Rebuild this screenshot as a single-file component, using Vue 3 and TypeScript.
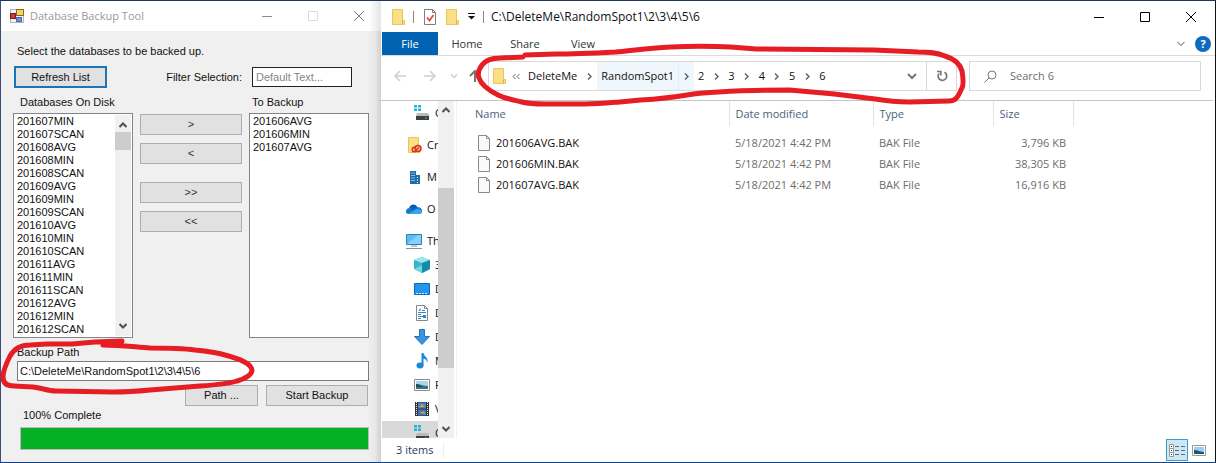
<script setup lang="ts">
import { ref } from 'vue'

interface BackupFile {
  name: string
  modified: string
  type: string
  size: string
}

interface NavItem {
  icon: string
  label: string
  level: number
  active?: boolean
}

const onDisk: string[] = [
  '201607MIN', '201607SCAN', '201608AVG', '201608MIN', '201608SCAN', '201609AVG',
  '201609MIN', '201609SCAN', '201610AVG', '201610MIN', '201610SCAN', '201611AVG',
  '201611MIN', '201611SCAN', '201612AVG', '201612MIN', '201612SCAN',
]
const toBackup: string[] = ['201606AVG', '201606MIN', '201607AVG']
const backupPath = ref('C:\\DeleteMe\\RandomSpot1\\2\\3\\4\\5\\6')
const filterText = ref('')
const searchText = ref('')

const crumbs: string[] = ['DeleteMe', 'RandomSpot1', '2', '3', '4', '5', '6']

const files: BackupFile[] = [
  { name: '201606AVG.BAK', modified: '5/18/2021 4:42 PM', type: 'BAK File', size: '3,796 KB' },
  { name: '201606MIN.BAK', modified: '5/18/2021 4:42 PM', type: 'BAK File', size: '38,305 KB' },
  { name: '201607AVG.BAK', modified: '5/18/2021 4:42 PM', type: 'BAK File', size: '16,916 KB' },
]

const navItems: NavItem[] = [
  { icon: 'drive', label: 'C', level: 1 },
  { icon: 'cloud-folder', label: 'Cr', level: 0 },
  { icon: 'building', label: 'M', level: 0 },
  { icon: 'onedrive', label: 'O', level: 0 },
  { icon: 'pc', label: 'Th', level: 0 },
  { icon: 'cube', label: '3', level: 1 },
  { icon: 'desktop', label: 'D', level: 1 },
  { icon: 'document', label: 'D', level: 1 },
  { icon: 'download', label: 'D', level: 1 },
  { icon: 'music', label: 'M', level: 1 },
  { icon: 'picture', label: 'P', level: 1 },
  { icon: 'video', label: 'V', level: 1 },
  { icon: 'drive', label: 'C', level: 1, active: true },
]
</script>

<template>
  <div class="desktop">
    <section class="tool" aria-label="Database Backup Tool">
      <header class="tool-title">
        <svg class="app-icon" width="14" height="14" viewBox="0 0 14 14">
          <rect x="0.5" y="0.5" width="13" height="13" fill="#f4f4f4" stroke="#b5b5b5" />
          <rect x="6.5" y="0.5" width="7" height="6" fill="#f7d25a" stroke="#8a6a1c" />
          <rect x="0.5" y="4.5" width="5" height="5" fill="#c83a32" stroke="#7a1e1a" />
          <rect x="6.5" y="8.5" width="5" height="4" fill="#6d93dc" stroke="#4a67a8" />
        </svg>
        <h1>Database Backup Tool</h1>
        <button class="win" aria-label="Minimize"><svg width="10" height="10"><path d="M0 5.5h10" stroke="#8c8c8c" /></svg></button>
        <button class="win" aria-label="Maximize" disabled><svg width="10" height="10"><path d="M.5 .5h9v9h-9z" fill="none" stroke="#dcdcdc" /></svg></button>
        <button class="win" aria-label="Close"><svg width="10" height="10"><path d="M0 0l10 10M10 0L0 10" stroke="#7c7c7c" /></svg></button>
      </header>

      <div class="tool-body">
        <p class="intro">Select the databases to be backed up.</p>
        <div class="filter-row">
          <button class="btn focus">Refresh List</button>
          <label for="filter">Filter Selection:</label>
          <input id="filter" v-model="filterText" type="text" placeholder="Default Text..." />
        </div>

        <div class="lists">
          <div class="list-col">
            <label for="disk">Databases On Disk</label>
            <div class="listbox">
              <select id="disk" multiple>
                <option v-for="d in onDisk" :key="d">{{ d }}</option>
              </select>
              <div class="scroll">
                <svg width="8" height="6"><path d="M.5 5L4 1.500L7.500 5" fill="none" stroke="#505050" stroke-width="2" /></svg>
                <i class="thumb"></i>
                <svg class="down" width="8" height="6"><path d="M.5 1L4 4.500L7.500 1" fill="none" stroke="#505050" stroke-width="2" /></svg>
              </div>
            </div>
          </div>
          <div class="movers">
            <button class="btn">&gt;</button>
            <button class="btn">&lt;</button>
            <button class="btn apart">&gt;&gt;</button>
            <button class="btn">&lt;&lt;</button>
          </div>
          <div class="list-col">
            <label for="backup">To Backup</label>
            <div class="listbox">
              <select id="backup" multiple>
                <option v-for="d in toBackup" :key="d">{{ d }}</option>
              </select>
            </div>
          </div>
        </div>

        <div class="path-block">
          <label for="path">Backup Path</label>
          <input id="path" v-model="backupPath" type="text" />
          <svg class="mark" width="258" height="58" viewBox="0 0 258 58" aria-hidden="true">
            <path
              d="M122 4L95 5L72 7L47 7L30 8C20 8 14 12 10 19C6 27 3 34 3 40C3 46 7 49 14 49L33 50C42 51 48 54 56 54L113 55C125 55 140 54 150 53L200 49C215 48 228 47 237 44C247 41 252 37 252 33C251 26 240 22 225 18C215 15 205 14 195 13C180 11 165 11 150 11C135 10 118 8 103 8"
            />
          </svg>
        </div>
        <div class="actions">
          <button class="btn path-btn">Path ...</button>
          <button class="btn start-btn">Start Backup</button>
        </div>
        <div class="progress-block">
          <label for="progress">100% Complete</label>
          <progress id="progress" value="100" max="100"></progress>
        </div>
      </div>
    </section>

    <section class="explorer" aria-label="File Explorer">
      <header class="ex-title">
        <svg class="folder" width="13" height="16" viewBox="0 0 13 16"><path d="M.5.5h10v11h2v4H.5z" fill="#fbdf85" stroke="#e9c55c" /><path d="M10.500 15v-3.500" stroke="#d9b044" /></svg>
        <i class="bar"></i>
        <svg class="check" width="12" height="16" viewBox="0 0 12 16"><path d="M.5.5h8l3 3v12H.5z" fill="#fff" stroke="#7d7d7d" /><path d="M8.500.5v3h3" fill="none" stroke="#7d7d7d" /><path d="M3 8.500l2.500 3L9.500 6" fill="none" stroke="#e0482d" stroke-width="1.700" /></svg>
        <svg class="folder" width="13" height="16" viewBox="0 0 13 16"><path d="M.5.5h10v11h2v4H.5z" fill="#fbdf85" stroke="#e9c55c" /><path d="M10.500 15v-3.500" stroke="#d9b044" /></svg>
        <svg class="qat" width="7" height="7" viewBox="0 0 7 7"><path d="M0 .5h7" stroke="#111" /><path d="M0 3h7L3.500 6.500z" fill="#111" /></svg>
        <i class="bar"></i>
        <h2>C:\DeleteMe\RandomSpot1\2\3\4\5\6</h2>
        <button class="win" aria-label="Minimize"><svg width="10" height="10"><path d="M0 5.500h10" stroke="#000" /></svg></button>
        <button class="win" aria-label="Maximize"><svg width="10" height="10"><path d="M.5 .5h9v9h-9z" fill="none" stroke="#000" /></svg></button>
        <button class="win" aria-label="Close"><svg width="10" height="10"><path d="M0 0l10 10M10 0L0 10" stroke="#000" /></svg></button>
      </header>

      <nav class="tabs" aria-label="Ribbon">
        <button class="tab file">File</button>
        <button class="tab">Home</button>
        <button class="tab">Share</button>
        <button class="tab">View</button>
        <span class="grow"></span>
        <svg width="8" height="6"><path d="M.5 1L4 4.500L7.500 1" fill="none" stroke="#999" stroke-width="1.200" /></svg>
        <button class="help" aria-label="Help">?</button>
      </nav>

      <div class="address-row">
        <svg class="arrows" width="104" height="14" viewBox="0 0 104 14" fill="none" stroke="#cfcfcf" stroke-width="1.500">
          <path d="M13 7H2M7 2L2 7l5 5" />
          <path d="M31 7h11M37 2l5 5-5 5" />
          <path d="M58 5.500l3 3 3-3" />
          <path d="M82 13V2M77 7l5-5 5 5" stroke="#777" stroke-width="2" />
        </svg>
        <div class="address">
          <svg width="13" height="16" viewBox="0 0 13 16"><path d="M.5.5h10v11h2v4H.5z" fill="#fbdf85" stroke="#e9c55c" /><path d="M10.500 15v-3.500" stroke="#d9b044" /></svg>
          <svg class="more" width="8" height="7"><path d="M3.500 1L1 3.500L3.500 6M7.500 1L5 3.500L7.500 6" fill="none" stroke="#666" /></svg>
          <span v-for="(c, i) in crumbs" :key="c" class="crumb" :class="{ hot: i === 1 }">
            <a href="#">{{ c }}</a>
            <i v-if="i < crumbs.length - 1"><svg width="5" height="7"><path d="M1 .5L4 3.500L1 6.500" fill="none" stroke="#666" stroke-width="1.500" /></svg></i>
          </span>
          <span class="grow"></span>
          <svg class="drop" width="10" height="7"><path d="M1 1L5 5L9 1" fill="none" stroke="#777" stroke-width="2" /></svg>
          <button class="refresh" aria-label="Refresh">
            <svg width="12" height="12" viewBox="0 0 12 12" fill="none" stroke="#777" stroke-width="1.700"><path d="M8.500 2.300A4.300 4.300 0 1 1 3 3.400" /><path d="M1 1.500h3.800v4" /></svg>
          </button>
          <svg class="mark-wide" viewBox="0 0 494 74" preserveAspectRatio="none" aria-hidden="true">
            <path
              d="M47 10L24 11C14 11 9 14 6 18C3 22 1 26 3 31C5 37 12 43 22 48C30 52 38 53 46 55C54 57 61 57 69 57L109 57C122 57 132 56 144 55L165 53C185 52 200 50 218 47C235 45 245 45 260 44C275 43 300 43 314 43L359 47L400 52C412 54 422 55 434 55L474 54C483 54 484 46 487 41C489 37 488 30 487 24C485 17 480 12 470 9C460 5 452 5 443 5L399 3L281 2L255 0C235 -1 215 -1 195 0C175 1 160 3 140 5C120 6 100 7 80 7L49 8"
            />
          </svg>
        </div>
        <div class="search">
          <svg width="13" height="13" viewBox="0 0 13 13" fill="none" stroke="#777"><circle cx="8" cy="5" r="4" /><path d="M5 8L.5 12.500" /></svg>
          <input v-model="searchText" type="text" aria-label="Search 6" placeholder="Search 6" />
        </div>
      </div>

      <div class="panes">
        <div class="tree">
          <div
            v-for="(n, i) in navItems"
            :key="i"
            class="node"
            :class="{ child: n.level === 1, tall: i < 4, active: n.active }"
          >
            <svg width="16" height="16" viewBox="0 0 16 16">
              <g v-if="n.icon === 'drive'">
                <path d="M0 0h3v2.500H0zM4 0h3v2.500H4zM0 3.500h3V6H0zM4 3.500h3V6H4z" fill="#1fb5dc" />
                <path d="M3 8h11l1.500 3H2z" fill="#b8bcc0" />
                <path d="M2 11h13v4H2z" fill="#3c4043" /><path d="M11 13h2" stroke="#48d26c" />
              </g>
              <g v-else-if="n.icon === 'cloud-folder'">
                <path d="M2.500.5h10v13h1v2h-11z" fill="#fbdf85" stroke="#e9c55c" />
                <circle cx="8.500" cy="12.500" r="2.300" fill="none" stroke="#d8301e" stroke-width="1.500" /><circle cx="12" cy="11.500" r="3" fill="#f3bb8a" stroke="#d8301e" stroke-width="1.500" /><path d="M10 13l3-2.500" stroke="#d8301e" stroke-width="1.500" />
              </g>
              <g v-else-if="n.icon === 'building'">
                <path d="M4 2h6v13H4zM10 6h4v9h-4z" fill="#1a70ae" />
                <path d="M5.500 4h3M5.500 6.500h3M5.500 9h3M5.500 11.500h3M11 8.500h2M11 11h2M11 13.500h2" stroke="#fff" stroke-dasharray="1 1" />
              </g>
              <g v-else-if="n.icon === 'onedrive'">
                <path d="M3 13C-1 13-1 8 3 7C4 3 9 2 11 6C15 6 17 9 16 11C15 13 14 13 12 13z" fill="#1679ce" />
                <path d="M4 6C6 3 10 3 11 6L7 9z" fill="#0c5bb0" /><path d="M2 13l9-5c4 0 6 2 4 4c-1 1-2 1-3 1z" fill="#35a5ec" />
              </g>
              <g v-else-if="n.icon === 'pc'">
                <path d="M.5 1.500h15v10H.5z" fill="#59bdf4" stroke="#2a7fbd" /><path d="M1 11L12 2h3v9z" fill="#84d2fb" />
                <path d="M5 13h6M0 15.500h16" stroke="#8a8f94" />
              </g>
              <g v-else-if="n.icon === 'cube'">
                <path d="M0 3l8-3 8 3v9l-8 4-8-4z" fill="#39b3c8" /><path d="M0 3l8-3 8 3-8 3z" fill="#9be8f0" />
                <path d="M8 6l8-3v9l-8 4z" fill="#168ba3" /><path d="M0 12l8-4v8z" fill="#6fd6e2" />
              </g>
              <g v-else-if="n.icon === 'desktop'">
                <path d="M.5 2.500h15v11H.5z" fill="#2196ef" stroke="#1266b4" /><path d="M2 12.500h12" stroke="#d5ecff" stroke-dasharray="2 1" />
              </g>
              <g v-else-if="n.icon === 'document'">
                <path d="M2.500.5h8l3 3v12h-11z" fill="#fff" stroke="#878787" /><path d="M10.500.5v3h3" fill="none" stroke="#878787" />
                <path d="M4 7.500h8M4 9.500h3M4 11.500h8M4 13.500h3M8 5.500h3" stroke="#2f86c9" /><path d="M4.500 5.500L6.500 3v3M9 10h3v3H9z" fill="#2f86c9" />
              </g>
              <g v-else-if="n.icon === 'download'">
                <path d="M5.500 0.500h5v7h5L8 15.500.5 7.500h5z" fill="#3b92de" stroke="#2575bd" />
              </g>
              <g v-else-if="n.icon === 'music'">
                <ellipse cx="6" cy="12.500" rx="3.500" ry="3" fill="#1a86d8" /><path d="M7.500 0h2c0 3 5 4 4 10c-1-3-2-4-4-4.500v7h-2z" fill="#1a86d8" />
              </g>
              <g v-else-if="n.icon === 'picture'">
                <path d="M.5 2.500h15v11H.5z" fill="#fff" stroke="#8a8a8a" /><path d="M2 4h12v8H2z" fill="#a9d4ee" />
                <path d="M2 7c4 0 7 2 12 2v3H2z" fill="#3b7180" /><path d="M2 7c3 0 5 2 7 3H2z" fill="#214f56" />
              </g>
              <g v-else>
                <path d="M1 1h14v14H1z" fill="#333" /><path d="M4 1.500h8v6H4z" fill="#4d7fc4" /><path d="M4 8.500h8v6H4z" fill="#4775ba" />
                <path d="M5 6l3-3 3 3zM6 12l3-2 3 3z" fill="#c8a943" /><path d="M2.500 1v14M13.500 1v14" stroke="#eee" stroke-dasharray="1 1" />
              </g>
            </svg>
            <span>{{ n.label }}</span>
          </div>
        </div>
        <div class="tree-scroll">
          <svg width="8" height="6"><path d="M.5 5L4 1.500L7.500 5" fill="none" stroke="#505050" stroke-width="2" /></svg>
          <i class="thumb"></i>
          <svg class="down" width="8" height="6"><path d="M.5 1L4 4.500L7.500 1" fill="none" stroke="#505050" stroke-width="2" /></svg>
        </div>
        <div class="content">
          <table>
            <thead>
              <tr>
                <th class="c-name">Name</th>
                <th class="c-date">Date modified</th>
                <th class="c-type">Type</th>
                <th class="c-size">Size</th>
                <th></th>
              </tr>
            </thead>
            <tbody>
              <tr v-for="f in files" :key="f.name">
                <td class="name">
                  <svg width="12" height="16" viewBox="0 0 12 16"><path d="M.5.5h8l3 3v12H.5z" fill="#fafafa" stroke="#8a8a8a" /><path d="M8.500.5v3h3" fill="none" stroke="#8a8a8a" /></svg>
                  <span>{{ f.name }}</span>
                </td>
                <td>{{ f.modified }}</td>
                <td>{{ f.type }}</td>
                <td class="size">{{ f.size }}</td>
                <td></td>
              </tr>
            </tbody>
          </table>
        </div>
      </div>

      <footer class="status">
        <span>3 items</span>
        <i class="status-sep"></i>
        <span class="grow"></span>
        <button class="view on" aria-label="Details view">
          <svg width="16" height="13" viewBox="0 0 16 13" fill="none"><path d="M.5.5h4v4h-4zM.5 4.500h4v4h-4zM.5 8.500h4v4h-4z" fill="#fff" stroke="#999" /><path d="M2 2.500h1M2 6.500h1M2 10.500h1" stroke="#222" /><path d="M6 2.500h4M12 2.500h4M6 6.500h4M12 6.500h4M6 10.500h4M12 10.500h4" stroke="#667" /></svg>
        </button>
        <button class="view" aria-label="Large icons view">
          <svg width="14" height="11" viewBox="0 0 14 11"><path d="M.5.5h13v10H.5z" fill="#fff" stroke="#999" /><path d="M2 2h10v7H2z" fill="#9ccdf0" /><path d="M2 5c4 0 6 2 10 2v2H2z" fill="#23566c" /></svg>
        </button>
      </footer>
    </section>
  </div>
</template>

<style>
body {
  margin: 0;
}
</style>

<style scoped>
* {
  box-sizing: border-box;
}
.desktop {
  display: grid;
  grid-template-columns: 381px minmax(0, 1fr);
  min-height: 100vh;
  border-top: 1px solid #1f3560;
  border-bottom: 1px solid #17407f;
  background: #fff;
}
button,
input,
select {
  font: inherit;
  color: inherit;
  margin: 0;
}
h1,
h2,
p {
  margin: 0;
  font-size: inherit;
  font-weight: 400;
}
svg {
  display: block;
  flex: none;
}
.grow {
  flex: 1;
}
.win {
  display: flex;
  align-items: center;
  justify-content: center;
  width: 46px;
  height: 30px;
  padding: 0;
  border: 0;
  background: none;
}

/* Backup tool window */
.tool {
  display: flex;
  flex-direction: column;
  border-left: 1px solid #3a4d7c;
  background: linear-gradient(to left, #cfcfcf, #e8e8e8 6px, #f0f0f0 14px);
  font: 11px/13px "Liberation Sans", Arial, sans-serif;
  color: #111;
}
.tool-title {
  display: flex;
  align-items: center;
  height: 30px;
  padding-left: 9px;
  background: linear-gradient(to left, #e4e4e4, #fff 12px);
  font: 11px/16px "Open Sans", "Noto Sans", sans-serif;
  color: #999;
}
.tool-title h1 {
  flex: 1;
  padding-left: 6px;
}
.tool-title .win:last-child {
  margin-right: -1px;
}
.tool-body {
  flex: 1;
  padding: 14px 12px 0 12px;
}
.intro {
  padding-left: 4px;
}
.btn {
  height: 21px;
  padding: 0;
  border: 1px solid #adadad;
  background: #e1e1e1;
  text-align: center;
}
.filter-row {
  display: flex;
  align-items: center;
  height: 22px;
  margin-top: 8px;
}
.filter-row .focus {
  width: 93px;
  height: 22px;
  margin-left: 1px;
  border: 2px solid #1c74b8;
}
.filter-row label {
  flex: 1;
  padding-right: 10px;
  text-align: right;
}
.filter-row input {
  width: 100px;
  height: 20px;
  margin-right: 17px;
  padding: 0 3px;
  border: 1px solid #222;
  background: #fff;
}
input::placeholder {
  color: #858585;
  opacity: 1;
}
.lists {
  display: grid;
  grid-template-columns: 120px 1fr 120px;
  column-gap: 7px;
  margin-top: 8px;
}
.list-col label {
  display: block;
  height: 17px;
  padding-left: 7px;
}
.list-col:last-child label {
  padding-left: 3px;
}
.listbox {
  display: flex;
  height: 225px;
  border: 1px solid #82868c;
  background: #fff;
}
.listbox select {
  flex: 1;
  min-width: 0;
  height: 100%;
  padding: 1px 0 0;
  border: 0;
  border-radius: 0;
  outline: 0;
  background: #fff;
  overflow: hidden;
  scrollbar-width: none;
}
.listbox option {
  height: 13px;
  min-height: 13px;
  padding: 0 3px;
  line-height: 13px;
}
.scroll,
.tree-scroll {
  display: flex;
  flex-direction: column;
  align-items: center;
  width: 16px;
  background: #f0f0f0;
}
.scroll {
  margin: 1px 1px 1px 0;
  padding: 7px 0;
}
.scroll .thumb {
  width: 16px;
  height: 18px;
  margin-top: 4px;
  background: #cdcdcd;
}
.down {
  margin-top: auto;
}
.movers {
  display: flex;
  flex-direction: column;
  gap: 8px;
  padding-top: 18px;
}
.movers .btn {
  color: #333;
}
.movers .apart {
  margin-top: 10px;
}
.path-block {
  position: relative;
  display: flex;
  flex-direction: column;
  gap: 2px;
  margin-top: 8px;
  padding-left: 4px;
}
.path-block input {
  height: 20px;
  padding: 0 2px;
  border: 1px solid #7a7a7a;
  background: #fff;
}
.mark,
.mark-wide {
  position: absolute;
  z-index: 1;
  overflow: visible;
  fill: none;
  stroke: #e71d25;
  stroke-width: 5px;
  stroke-linecap: round;
  stroke-linejoin: round;
  pointer-events: none;
}
.mark {
  left: -13px;
  top: -9px;
}
.actions {
  display: flex;
  justify-content: flex-end;
  gap: 8px;
  margin: 4px 1px 0 0;
}
.path-btn {
  width: 73px;
}
.start-btn {
  width: 102px;
}
.progress-block {
  display: flex;
  flex-direction: column;
  gap: 5px;
  padding: 3px 0 0 7px;
}
.progress-block label {
  padding-left: 3px;
}
progress {
  appearance: none;
  width: 100%;
  height: 23px;
  border: 1px solid #bcbcbc;
  background: #e6e6e6;
}
progress::-webkit-progress-bar {
  background: #e6e6e6;
}
progress::-webkit-progress-value {
  background: #06b025;
}

/* Explorer window */
.explorer {
  display: flex;
  flex-direction: column;
  min-width: 0;
  border-right: 1px solid #111;
  background: #fff;
  font: 11px/16px "Open Sans", "Noto Sans", sans-serif;
  color: #111;
}
.ex-title {
  display: flex;
  align-items: center;
  height: 31px;
  padding: 0 1px 0 11px;
}
.ex-title .bar {
  width: 1px;
  height: 12px;
  margin: 0 10px 0 8px;
  background: #888;
}
.ex-title .check {
  margin-right: 10px;
}
.qat {
  margin-left: 9px;
}
.ex-title .qat + .bar {
  margin-right: 7px;
}
.ex-title h2 {
  flex: 1;
  min-width: 0;
  font-size: 12px;
  white-space: nowrap;
}
.tabs {
  display: flex;
  align-items: center;
  height: 24px;
  padding: 0 4px 0 1px;
  border-bottom: 1px solid #dadbdc;
}
.tab {
  width: 58px;
  height: 23px;
  padding: 0;
  border: 0;
  background: none;
  color: #333;
}
.tab.file {
  width: 56px;
  background: #0063b1;
  color: #fff;
}
.help {
  width: 16px;
  height: 16px;
  margin-left: 10px;
  padding: 0;
  border: 0;
  border-radius: 50%;
  background: #0f6ac0;
  color: #fff;
  font-weight: 700;
}
.address-row {
  display: flex;
  align-items: center;
  height: 45px;
  margin-right: 2px;
  padding: 0 12px 4px 0;
  border-bottom: 1px solid #c4c4c4;
}
.arrows {
  margin: 0 -9px 0 12px;
}
.address,
.search {
  display: flex;
  align-items: center;
  height: 30px;
  border: 1px solid #d9d9d9;
  background: #fff;
}
.address {
  position: relative;
  flex: 1;
  min-width: 0;
  padding-left: 4px;
}
.more {
  margin: 0 4px 0 6px;
}
.crumb {
  display: flex;
  align-items: center;
  height: 28px;
}
.crumb a {
  padding: 0 4px;
  color: inherit;
  text-decoration: none;
}
.crumb i {
  display: flex;
  align-items: center;
  justify-content: center;
  width: 16px;
  height: 28px;
}
.crumb.hot {
  background: #f0f7fc;
}
.crumb.hot i {
  border-left: 1px solid #e0edf7;
}
.drop {
  margin-right: 9px;
}
.refresh {
  display: flex;
  align-items: center;
  justify-content: center;
  width: 30px;
  height: 28px;
  padding: 0;
  border: 0;
  border-left: 1px solid #d9d9d9;
  background: none;
}
.mark-wide {
  left: -13px;
  top: -15px;
  width: calc(100% + 26px);
  height: 74px;
}
.search {
  width: 232px;
  margin-left: 12px;
  padding-left: 14px;
}
.search input {
  flex: 1;
  min-width: 0;
  padding: 0 0 0 13px;
  border: 0;
  background: none;
}
.search input::placeholder {
  color: #6d6d6d;
}
.panes {
  display: flex;
  flex: 1 1 0;
  min-height: 0;
}
.tree {
  width: 56px;
  height: 337px;
  margin-left: 1px;
  overflow: hidden;
}
.node {
  display: flex;
  align-items: center;
  gap: 5px;
  height: 24px;
  padding-left: 24px;
  white-space: nowrap;
}
.node.tall {
  height: 32px;
  padding-bottom: 8px;
}
.node.child {
  padding-left: 32px;
}
.active {
  background: #d9d9d9;
}
.tree-scroll {
  height: 337px;
  padding: 6px 0;
}
.tree-scroll .thumb {
  width: 16px;
  height: 180px;
  margin-top: 75px;
  background: #cdcdcd;
}
.content {
  flex: 1;
  min-width: 0;
  margin-left: 2px;
  border-left: 1px solid #f0f0f0;
}
table {
  width: 100%;
  border-collapse: collapse;
  table-layout: fixed;
}
th {
  height: 25px;
  padding: 0 0 0 6px;
  border-right: 1px solid #e2e2e2;
  font-weight: 400;
  text-align: left;
  color: #4c607a;
}
th:last-child {
  border: 0;
}
.c-name {
  width: 272px;
  padding-left: 18px;
}
.c-date {
  width: 144px;
}
.c-type {
  width: 120px;
}
.c-size {
  width: 80px;
}
tbody::before {
  content: "";
  display: block;
  height: 6px;
}
td {
  height: 21px;
  padding: 0 7px 0 6px;
  color: #6d6d6d;
  white-space: nowrap;
}
.name {
  display: flex;
  align-items: center;
  gap: 6px;
  padding-left: 21px;
  color: #111;
}
.size {
  text-align: right;
}
.status {
  display: flex;
  align-items: center;
  height: 24px;
  padding: 0 5px 0 15px;
  color: #26395c;
}
.status-sep {
  width: 1px;
  height: 16px;
  margin-left: 10px;
  background: #eee;
}
.view {
  display: flex;
  align-items: center;
  justify-content: center;
  width: 22px;
  height: 22px;
  padding: 0;
  border: 0;
  background: none;
}
.view.on {
  border: 1px solid #3f9fc0;
  background: #cbe8f6;
}
</style>
